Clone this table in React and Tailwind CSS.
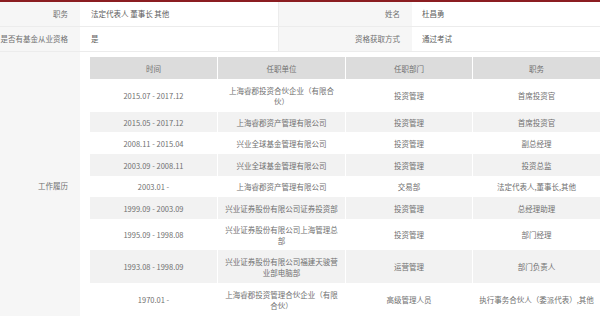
import React from 'react';

const history = [
  { time: '2015.07 - 2017.12', unit: ['上海睿郡投资合伙企业（有限合', '伙）'], dept: '投资管理', title: '首席投资官', h: 'h-[33px]' },
  { time: '2015.05 - 2017.12', unit: ['上海睿郡资产管理有限公司'], dept: '投资管理', title: '首席投资官', h: 'h-[20px]' },
  { time: '2008.11 - 2015.04', unit: ['兴业全球基金管理有限公司'], dept: '投资管理', title: '副总经理', h: 'h-[22px]' },
  { time: '2003.09 - 2008.11', unit: ['兴业全球基金管理有限公司'], dept: '投资管理', title: '投资总监', h: 'h-[22px]' },
  { time: '2003.01 -', unit: ['上海睿郡资产管理有限公司'], dept: '交易部', title: '法定代表人,董事长,其他', h: 'h-[21px]' },
  { time: '1999.09 - 2003.09', unit: ['兴业证券股份有限公司证券投资部'], dept: '投资管理', title: '总经理助理', h: 'h-[22px]' },
  { time: '1995.09 - 1998.08', unit: ['兴业证券股份有限公司上海管理总', '部'], dept: '投资管理', title: '部门经理', h: 'h-[31px]' },
  { time: '1993.08 - 1998.09', unit: ['兴业证券股份有限公司福建天骏营', '业部电脑部'], dept: '运营管理', title: '部门负责人', h: 'h-[33px]' },
  { time: '1970.01 -', unit: ['上海睿郡投资管理合伙企业（有限', '合伙）'], dept: '高级管理人员', title: '执行事务合伙人（委派代表）,其他', h: 'h-[33px]' },
];

const Cell = ({ children, first }) => (
  <div className={`flex flex-col items-center justify-center text-center leading-[11px] px-1 ${first ? '' : 'border-l border-white'}`}>
    {children}
  </div>
);

const App = () => {
  return (
    <div
      className="w-[600px] h-[316px] overflow-hidden bg-white border-t-2 border-[#8b1d21] text-[7.5px] text-[#707070]"
      style={{ fontFamily: '"Noto Sans CJK SC", "Noto Sans", sans-serif' }}
    >
      {/* Top info rows */}
      <div className="grid grid-cols-[80px_198px_134px_1fr] h-[25px] border-b border-[#ececec]">
        <div className="bg-[#f6f6f6] flex items-center justify-end pr-3">职务</div>
        <div className="flex items-center pl-[11px] text-[#5c5c5c]">法定代表人 董事长 其他</div>
        <div className="bg-[#f6f6f6] flex items-center justify-end pr-3 border-l border-[#ececec]">姓名</div>
        <div className="flex items-center pl-[10px] text-[#5c5c5c]">杜昌勇</div>
      </div>
      <div className="grid grid-cols-[80px_198px_134px_1fr] h-[25px] border-b border-[#ececec]">
        <div className="bg-[#f6f6f6] flex items-center justify-end pr-3">是否有基金从业资格</div>
        <div className="flex items-center pl-[11px] text-[#5c5c5c]">是</div>
        <div className="bg-[#f6f6f6] flex items-center justify-end pr-3 border-l border-[#ececec]">资格获取方式</div>
        <div className="flex items-center pl-[10px] text-[#5c5c5c]">通过考试</div>
      </div>

      {/* Work history */}
      <div className="grid grid-cols-[80px_1fr] h-[300px]">
        <div className="bg-[#f6f6f6] flex items-center justify-end pr-3 pb-[32px]">工作履历</div>
        <div className="pl-[10px] pt-[5px]">
          <div className="w-[510px]">
            <div className="grid grid-cols-[127px_128px_127px_128px] h-[22px] bg-[#dcdcdc]">
              <Cell first>时间</Cell>
              <Cell>任职单位</Cell>
              <Cell>任职部门</Cell>
              <Cell>职务</Cell>
            </div>
            {history.map((row, i) => (
              <div
                key={i}
                className={`grid grid-cols-[127px_128px_127px_128px] ${row.h} ${i % 2 === 1 ? 'bg-[#f2f2f2]' : 'bg-white'}`}
              >
                <Cell first>{row.time}</Cell>
                <Cell>
                  {row.unit.map((line, j) => (
                    <span key={j}>{line}</span>
                  ))}
                </Cell>
                <Cell>{row.dept}</Cell>
                <Cell>{row.title}</Cell>
              </div>
            ))}
          </div>
        </div>
      </div>
    </div>
  );
};

export default App;
